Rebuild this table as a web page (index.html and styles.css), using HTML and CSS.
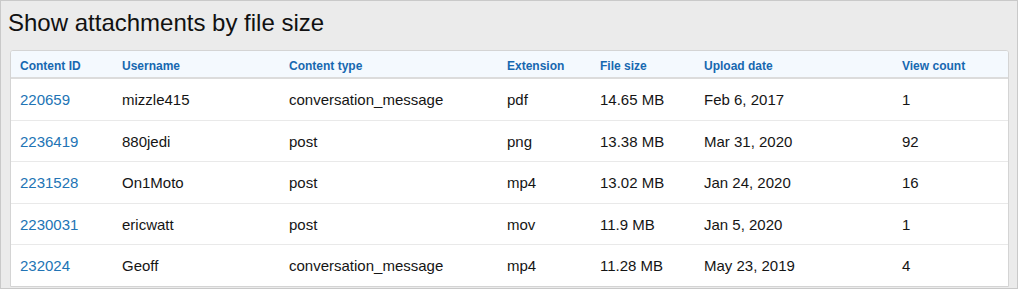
FILE: index.html
```html
<!DOCTYPE html>
<html lang="en">
<head>
    <meta charset="UTF-8">
    <title>Show attachments by file size</title>
    <link rel="stylesheet" href="styles.css">
</head>
<body>
    <h1 class="title">Show attachments by file size</h1>

    <div class="card">
        <table class="report">
            <colgroup>
                <col class="col-id">
                <col class="col-user">
                <col class="col-type">
                <col class="col-ext">
                <col class="col-size">
                <col class="col-date">
                <col class="col-views">
            </colgroup>
            <thead>
                <tr>
                    <th>Content ID</th>
                    <th>Username</th>
                    <th>Content type</th>
                    <th>Extension</th>
                    <th>File size</th>
                    <th>Upload date</th>
                    <th>View count</th>
                </tr>
            </thead>
            <tbody>
                <tr>
                    <td><a href="#">220659</a></td>
                    <td>mizzle415</td>
                    <td>conversation_message</td>
                    <td>pdf</td>
                    <td>14.65 MB</td>
                    <td>Feb 6, 2017</td>
                    <td>1</td>
                </tr>
                <tr>
                    <td><a href="#">2236419</a></td>
                    <td>880jedi</td>
                    <td>post</td>
                    <td>png</td>
                    <td>13.38 MB</td>
                    <td>Mar 31, 2020</td>
                    <td>92</td>
                </tr>
                <tr>
                    <td><a href="#">2231528</a></td>
                    <td>On1Moto</td>
                    <td>post</td>
                    <td>mp4</td>
                    <td>13.02 MB</td>
                    <td>Jan 24, 2020</td>
                    <td>16</td>
                </tr>
                <tr>
                    <td><a href="#">2230031</a></td>
                    <td>ericwatt</td>
                    <td>post</td>
                    <td>mov</td>
                    <td>11.9 MB</td>
                    <td>Jan 5, 2020</td>
                    <td>1</td>
                </tr>
                <tr>
                    <td><a href="#">232024</a></td>
                    <td>Geoff</td>
                    <td>conversation_message</td>
                    <td>mp4</td>
                    <td>11.28 MB</td>
                    <td>May 23, 2019</td>
                    <td>4</td>
                </tr>
            </tbody>
        </table>
    </div>
</body>
</html>
```

FILE: styles.css
```css
:root {
    --bg-page: #ebebeb;
    --frame: #c9c9c9;
    --card-border: #d4d4d4;
    --head-bg: #f4f9fe;
    --head-text: #1768b0;
    --link: #2274b5;
    --text: #151515;
    --row-line: #e9e9e9;
}

* {
    margin: 0;
    padding: 0;
    box-sizing: border-box;
}

html {
    height: 100%;
}

body {
    font-family: 'Liberation Sans', Arial, sans-serif;
    background: var(--bg-page);
    color: var(--text);
    height: 100%;
    border: 1px solid var(--frame);
    padding: 0 8px 0 9px;
    overflow: hidden;
}

.title {
    font-size: 24px;
    font-weight: normal;
    line-height: 28px;
    padding-top: 8px;
    margin-left: -2px;
    margin-bottom: 13px;
    color: #111;
}

.card {
    background: #fff;
    border: 1px solid var(--card-border);
    border-radius: 3px 3px 0 0;
    overflow: hidden;
}

.report {
    width: 100%;
    border-collapse: collapse;
    table-layout: fixed;
}

.col-id { width: 102px; }
.col-user { width: 167px; }
.col-type { width: 218px; }
.col-ext { width: 93px; }
.col-size { width: 104px; }
.col-date { width: 198px; }
.col-views { width: 115px; }

.report th {
    background: var(--head-bg);
    color: var(--head-text);
    font-size: 12px;
    font-weight: bold;
    line-height: 16px;
    text-align: left;
    padding: 7px 9px 3px;
    border-bottom: 2px solid #dcdcdc;
}

.report td {
    font-size: 15px;
    line-height: 18px;
    padding: 12px 9px 10.5px;
    border-bottom: 1px solid var(--row-line);
    white-space: nowrap;
}

.report tbody tr:last-child td {
    border-bottom: none;
}

.report a {
    color: var(--link);
    text-decoration: none;
}
```
